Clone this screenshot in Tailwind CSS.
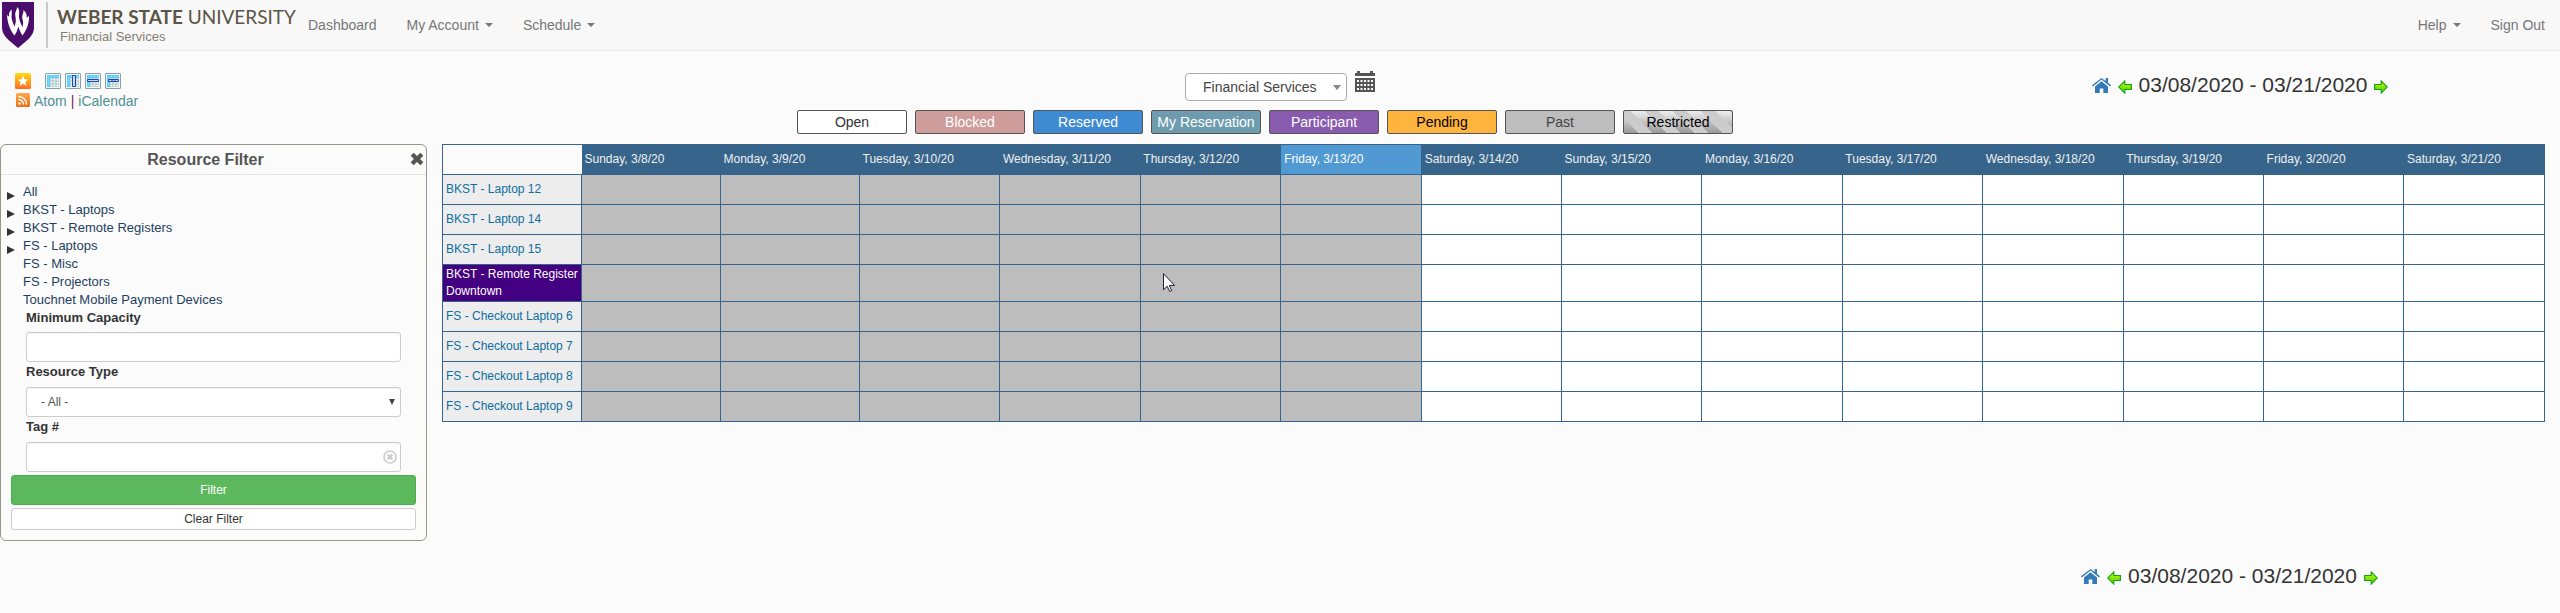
<!DOCTYPE html>
<html lang="en">
  <head>
    <meta charset="UTF-8" />
    <meta name="viewport" content="width=device-width, initial-scale=1.0" />
    <title>Resource Schedule</title>
    <script src="https://cdn.jsdelivr.net/npm/@tailwindcss/browser@4"></script>
  </head>
  <body
    class="bg-[#fbfbfb] text-[#333] font-['Liberation_Sans',Arial,sans-serif] text-sm leading-5"
  >
    <!-- shared icons -->
    <svg class="absolute size-0">
      <symbol id="home" viewBox="0 0 19 15">
        <path d="M9.500 3.200 3 8.500V15h4.700v-4.500h3.600V15H16V8.500z" />
        <path d="M13.700 0H16v4.700l3 2.600-.9 1.100-8.600-7L.9 8.400 0 7.300 9.500 0l4.200 3.100z" />
      </symbol>
      <symbol id="arrow" viewBox="0 0 14 14">
        <path
          d="M.6 4.500h6.600V.9L13.300 7l-6.100 6.100V9.500H.6z"
          fill="url(#arrowFill)"
          stroke="#14a014"
          stroke-width="1.100"
        />
      </symbol>
      <symbol id="grid" viewBox="0 0 16 16">
        <rect x=".5" y=".5" width="15" height="15" rx=".5" fill="#f4f8f8" stroke="#8aa2a5" />
        <path d="M2 2h12v3H5v9H2z" fill="#5dcdfb" />
        <path d="M5 5h9v9H5z" fill="#a9c4c4" />
        <path
          d="M5.500 5.500h2v2h-2zM8.500 5.500h2v2h-2zM11.500 5.500h2v2h-2zM5.500 8.500h2v2h-2zM8.500 8.500h2v2h-2zM11.500 8.500h2v2h-2zM5.500 11.500h2v2h-2zM8.500 11.500h2v2h-2zM11.500 11.500h2v2h-2z"
          fill="#f4fafa"
        />
        <path d="M3 5h1M3 8h1M3 11h1M6 3.500h1M9 3.500h1M12 3.500h1" stroke="#b4eaff" />
      </symbol>
      <defs>
        <linearGradient id="arrowFill" x1="0" y1="0" x2="0" y2="1">
          <stop offset="0" stop-color="#d4fb10" />
          <stop offset="1" stop-color="#35d400" />
        </linearGradient>
        <linearGradient id="starFill" x1="0" y1="0" x2="0" y2="1">
          <stop offset="0" stop-color="#ffdc10" />
          <stop offset="1" stop-color="#ff6a28" />
        </linearGradient>
        <linearGradient id="rssFill" x1="0" y1="0" x2="0" y2="1">
          <stop offset="0" stop-color="#ffa94d" />
          <stop offset="1" stop-color="#ee6d14" />
        </linearGradient>
      </defs>
    </svg>

    <nav
      class="flex h-[51px] items-center justify-between border-b border-[#e7e7e7] bg-[#f8f8f8] pr-[15px] text-[#777]"
    >
      <div class="flex items-center">
        <a href="#" class="flex w-[308px] items-center pl-0.5">
          <svg class="h-[46px] w-8 shrink-0" viewBox="0 0 32 46">
            <path d="M0 0h32v26c0 8-8 13-16 20C8 39 0 34 0 26z" fill="#4b0d6b" />
            <path
              d="M9.500 7.500c-2.500 2.500-2.800 4.500-2.300 7-1.200-.3-1.800-1-2.200-2 .3 7.500 2.500 15 7.500 21 1.700-2.500 3-5.500 3.800-9 1 3.500 2.500 6.300 4.200 9 4.500-6 7-13 6.500-20-.5 1.200-1.200 1.800-2.300 2 .4-3-.8-5-3.200-7.500.3 3-1.500 4.500-1.300 7.500.2 3 1.800 4 .3 9.500-2.500-5-4.200-9-3.400-14 .3-2 .2-4-2-6 0 3-2.300 5-1.800 8.500.4 3 1.200 6-.8 11-2.300-5-3.500-8.500-2.800-12.500.2-1.600.2-3-.2-4.500z"
              fill="#fff"
            />
          </svg>
          <span class="ml-3 h-[46px] w-0.5 shrink-0 bg-[#c9c9c9]"></span>
          <span class="ml-[9px] flex flex-col whitespace-nowrap">
            <span class="font-['Lato'] text-[19px] leading-6 text-[#5b5547]"
              ><b class="font-bold">WEBER STATE</b> UNIVERSITY</span
            >
            <span class="pl-[3px] text-[13px] leading-4 text-[#857f73]"
              >Financial Services</span
            >
          </span>
        </a>
        <ul class="flex gap-[30px]">
          <li><a href="#">Dashboard</a></li>
          <li>
            <a href="#" class="flex items-center gap-1.5"
              >My Account
              <span
                class="border-x-4 border-t-4 border-x-transparent border-t-[#777]"
              ></span
            ></a>
          </li>
          <li>
            <a href="#" class="flex items-center gap-1.5"
              >Schedule
              <span
                class="border-x-4 border-t-4 border-x-transparent border-t-[#777]"
              ></span
            ></a>
          </li>
        </ul>
      </div>
      <ul class="flex gap-[30px]">
        <li>
          <a href="#" class="flex items-center gap-1.5"
            >Help
            <span
              class="border-x-4 border-t-4 border-x-transparent border-t-[#777]"
            ></span
          ></a>
        </li>
        <li><a href="#">Sign Out</a></li>
      </ul>
    </nav>

    <header class="grid grid-cols-4 pt-5">
      <div class="pl-[15px]">
        <div class="flex h-5 items-center gap-1">
          <a href="#" title="Make default" class="mr-2.5">
            <svg class="size-4" viewBox="0 0 16 16">
              <rect width="16" height="16" rx="1.500" fill="url(#starFill)" />
              <path
                d="m8 2.800 1.500 3.500 3.800.3-2.900 2.500.9 3.700L8 10.800l-3.300 2 .9-3.700-2.900-2.500 3.800-.3z"
                fill="#fff"
              />
            </svg>
          </a>
          <a href="#" title="Standard view">
            <svg class="size-4"><use href="#grid" /></svg>
          </a>
          <a href="#" title="Tall view">
            <svg class="size-4" viewBox="0 0 16 16">
              <use href="#grid" />
              <path d="M7.500 2.500h3v11h-3z" fill="#c9dcfa" stroke="#1f46b8" />
            </svg>
          </a>
          <a href="#" title="Wide view">
            <svg class="size-4" viewBox="0 0 16 16">
              <use href="#grid" />
              <path d="M2.500 6.500h11v2h-11z" fill="#c9dcfa" stroke="#1f46b8" />
            </svg>
          </a>
          <a href="#" title="Week view">
            <svg class="size-4" viewBox="0 0 16 16">
              <use href="#grid" />
              <path
                d="M3.500 6.500h10v2h-10zM7 6.500v2M10 6.500v2"
                fill="#c9dcfa"
                stroke="#1f46b8"
              />
            </svg>
          </a>
        </div>
        <div class="flex h-[19px] items-center gap-1 text-[#4f9095]">
          <svg class="size-[15px]" viewBox="0 0 15 15">
            <rect x="1" width="14" height="14" rx="1.500" fill="url(#rssFill)" />
            <circle cx="4.500" cy="10.500" r="1.300" fill="#fff" />
            <path
              d="M3.500 6.500a5 5 0 0 1 5 5M3.500 3.500a8 8 0 0 1 8 8"
              fill="none"
              stroke="#fff"
              stroke-width="1.400"
            />
          </svg>
          <a href="#">Atom</a>
          <span class="text-[#7b1858]">|</span>
          <a href="#">iCalendar</a>
        </div>
      </div>

      <div class="col-span-2 flex items-start justify-center gap-2">
        <div class="relative mt-0.5">
          <select
            aria-label="Schedule"
            class="h-7 w-[162px] appearance-none rounded border border-[#aaa] bg-white pl-[17px] text-[#444]"
          >
            <option>Financial Services</option>
          </select>
          <span
            class="pointer-events-none absolute right-1.5 top-3 border-x-4 border-t-[5px] border-x-transparent border-t-[#888]"
          ></span>
        </div>
        <button type="button" title="Show calendar" class="text-[#555]">
          <svg class="h-[21px] w-5" viewBox="0 0 20 21" fill="currentColor">
            <path d="M0 2h2V0h3v2h10V0h3v2h2v3H0z" />
            <path
              fill-rule="evenodd"
              d="M0 7h20v14H0zM2 9v2h2V9zm3.500 0v2h2V9zM9 9v2h2V9zm3.500 0v2h2V9zM16 9v2h2V9zM2 13v2h2v-2zm3.500 0v2h2v-2zM9 13v2h2v-2zm3.500 0v2h2v-2zM16 13v2h2v-2zM2 17v2h2v-2zm3.500 0v2h2v-2zM9 17v2h2v-2zm3.500 0v2h2v-2zM16 17v2h2v-2z"
            />
          </svg>
        </button>
      </div>

      <div class="flex h-7 items-center justify-center text-[21px]">
        <a href="#" title="Today">
          <svg class="h-[15px] w-[19px] text-[#337ab7]" fill="currentColor">
            <use href="#home" />
          </svg>
        </a>
        <a href="#" title="Previous" class="ml-[7px] mt-1">
          <svg class="size-3.5 -scale-x-100"><use href="#arrow" /></svg>
        </a>
        <span class="mx-[7px]">03/08/2020 - 03/21/2020</span>
        <a href="#" title="Next" class="mt-1">
          <svg class="size-3.5"><use href="#arrow" /></svg>
        </a>
      </div>
    </header>

    <div class="flex justify-center gap-2 pr-[30px] text-center">
      <div class="h-6 w-[110px] rounded-xs border border-[#555] bg-white leading-[22px]">Open</div>
      <div class="h-6 w-[110px] rounded-xs border border-[#555] bg-[#cf9d9b] leading-[22px] text-white">Blocked</div>
      <div class="h-6 w-[110px] rounded-xs border border-[#555] bg-[#3f8bd3] leading-[22px] text-white">Reserved</div>
      <div class="h-6 w-[110px] rounded-xs border border-[#555] bg-[#6e9cae] leading-[22px] text-white">My Reservation</div>
      <div class="h-6 w-[110px] rounded-xs border border-[#555] bg-[#885bae] leading-[22px] text-white">Participant</div>
      <div class="h-6 w-[110px] rounded-xs border border-[#555] bg-[#ffb43e] leading-[22px] text-black">Pending</div>
      <div class="h-6 w-[110px] rounded-xs border border-[#555] bg-[#bdbdbd] leading-[22px] text-[#444]">Past</div>
      <div
        class="h-6 w-[110px] rounded-xs border border-[#555] bg-[repeating-linear-gradient(45deg,transparent_0px,transparent_10px,#ccc_10px,#ccc_20px),linear-gradient(to_bottom,#eee,#999)] leading-[22px] text-black"
      >
        Restricted
      </div>
    </div>

    <main class="flex items-start gap-[15px] pr-[15px] pt-2.5">
      <aside
        class="w-[427px] shrink-0 rounded-md border border-[#96968a] pb-2.5 text-[13px]"
      >
        <div class="relative border-b border-[#e5e5e5] pr-4 text-center">
          <h2 class="text-base leading-[29px] font-bold text-[#555]">Resource Filter</h2>
          <button
            type="button"
            title="Close filter"
            class="absolute right-0.5 top-[7px] text-[#555]"
          >
            <svg class="size-[14px]" viewBox="0 0 13 13">
              <path d="m2 2 9 9M11 2l-9 9" stroke="currentColor" stroke-width="4" />
            </svg>
          </button>
        </div>

        <ul id="tree" class="pl-1.5 pt-2 leading-[18px] text-[#1d3f5e]"></ul>

        <form class="px-2.5">
          <div class="flex flex-col px-[15px] font-bold">
            <label for="capacity" class="h-[23px] leading-[18px]">Minimum Capacity</label>
            <input
              id="capacity"
              class="h-[30px] rounded-[3px] border border-[#ccc] bg-white px-2.5 font-normal inset-shadow-xs"
            />
            <label for="resourceType" class="h-[25px] leading-5">Resource Type</label>
            <div class="relative">
              <select
                id="resourceType"
                class="h-[30px] w-full appearance-none rounded-[3px] border border-[#ccc] bg-white pl-3.5 text-xs font-normal text-[#555] inset-shadow-xs"
              >
                <option>- All -</option>
              </select>
              <span
                class="pointer-events-none absolute right-1.5 top-3 border-x-[3px] border-t-[6px] border-x-transparent border-t-[#444]"
              ></span>
            </div>
            <label for="tag" class="h-[25px] leading-5">Tag #</label>
            <div class="relative">
              <input
                id="tag"
                class="h-[30px] w-full rounded-[3px] border border-[#ccc] bg-white px-2.5 font-normal inset-shadow-xs"
              />
              <button
                type="button"
                title="Clear"
                class="absolute right-1 top-2 text-[#ccc]"
              >
                <svg class="size-3.5" viewBox="0 0 14 14" fill="none" stroke="currentColor">
                  <circle cx="7" cy="7" r="6" stroke-width="1.700" />
                  <path d="m4.600 4.600 4.800 4.800M9.400 4.600 4.600 9.400" stroke-width="2.200" />
                </svg>
              </button>
            </div>
          </div>
          <button
            type="submit"
            class="mt-[3px] block h-[30px] w-full rounded-[3px] border border-[#4cae4c] bg-[#5cb85c] text-xs text-white"
          >
            Filter
          </button>
          <button
            type="reset"
            class="mt-[3px] block h-[22px] w-full rounded-[3px] border border-[#ccc] bg-white text-xs"
          >
            Clear Filter
          </button>
        </form>
      </aside>

      <table
        class="w-full table-fixed border-collapse border border-[#36648b] text-left text-xs leading-[17px]"
      >
        <colgroup>
          <col class="w-[139px]" />
          <col class="w-[139px]" />
          <col class="w-[139px]" />
          <col span="12" />
        </colgroup>
        <thead>
          <tr id="days" class="h-[30px] bg-[#36648b] text-[#f0f0f0]">
            <td class="bg-[#fbfbfb]"></td>
          </tr>
        </thead>
        <tbody id="slots"></tbody>
      </table>
    </main>

    <footer class="grid grid-cols-4 pr-3 pt-[21px]">
      <div class="col-start-4 flex h-7 items-center justify-center text-[21px]">
        <a href="#" title="Today">
          <svg class="h-[15px] w-[19px] text-[#337ab7]" fill="currentColor">
            <use href="#home" />
          </svg>
        </a>
        <a href="#" title="Previous" class="ml-[7px] mt-1">
          <svg class="size-3.5 -scale-x-100"><use href="#arrow" /></svg>
        </a>
        <span class="mx-[7px]">03/08/2020 - 03/21/2020</span>
        <a href="#" title="Next" class="mt-1">
          <svg class="size-3.5"><use href="#arrow" /></svg>
        </a>
      </div>
    </footer>

    <script>
      const groups = [
        ["All", true],
        ["BKST - Laptops", true],
        ["BKST - Remote Registers", true],
        ["FS - Laptops", true],
        ["FS - Misc", false],
        ["FS - Projectors", false],
        ["Touchnet Mobile Payment Devices", false],
      ];
      const days = [
        "Sunday, 3/8/20",
        "Monday, 3/9/20",
        "Tuesday, 3/10/20",
        "Wednesday, 3/11/20",
        "Thursday, 3/12/20",
        "Friday, 3/13/20",
        "Saturday, 3/14/20",
        "Sunday, 3/15/20",
        "Monday, 3/16/20",
        "Tuesday, 3/17/20",
        "Wednesday, 3/18/20",
        "Thursday, 3/19/20",
        "Friday, 3/20/20",
        "Saturday, 3/21/20",
      ];
      const resources = [
        "BKST - Laptop 12",
        "BKST - Laptop 14",
        "BKST - Laptop 15",
        "BKST - Remote Register Downtown",
        "FS - Checkout Laptop 6",
        "FS - Checkout Laptop 7",
        "FS - Checkout Laptop 8",
        "FS - Checkout Laptop 9",
      ];
      const today = 5;
      const selected = 3;
      const pointer = `<svg class="absolute left-[22px] top-2 h-[19px] w-3" viewBox="0 0 12 19">
        <path d="M.5.700v16l3.700-3.500 2.500 5.300 2-1-2.400-5.100h5.200z" fill="#fff" stroke="#223" />
      </svg>`;

      document.getElementById("tree").innerHTML = groups
        .map(
          ([name, open]) => `<li class="flex items-center">
            <span class="w-4">${
              open
                ? '<span class="mt-2 block w-0 border-y-4 border-l-8 border-y-transparent border-l-[#333]"></span>'
                : ""
            }</span>
            <a href="#">${name}</a>
          </li>`
        )
        .join("");

      document.getElementById("days").innerHTML += days
        .map(
          (day, i) =>
            `<th class="px-[3px] font-normal ${
              i === today ? "border border-[#36648b] bg-[#5199d3] text-white" : ""
            }">${day}</th>`
        )
        .join("");

      document.getElementById("slots").innerHTML = resources
        .map((name, row) => {
          const cells = days
            .map(
              (_, i) =>
                `<td class="relative border border-[#36648b] ${
                  i <= today ? "bg-[#bdbdbd]" : "bg-white"
                }">${row === selected && i === 4 ? pointer : ""}</td>`
            )
            .join("");
          return `<tr class="h-[30px]">
            <th class="border border-[#36648b] px-[3px] font-normal ${
              row === selected
                ? "bg-[#430080] py-px text-white"
                : "bg-[#ededed] text-[#0f6e9e]"
            }"><a href="#">${name}</a></th>${cells}</tr>`;
        })
        .join("");
    </script>
  </body>
</html>
